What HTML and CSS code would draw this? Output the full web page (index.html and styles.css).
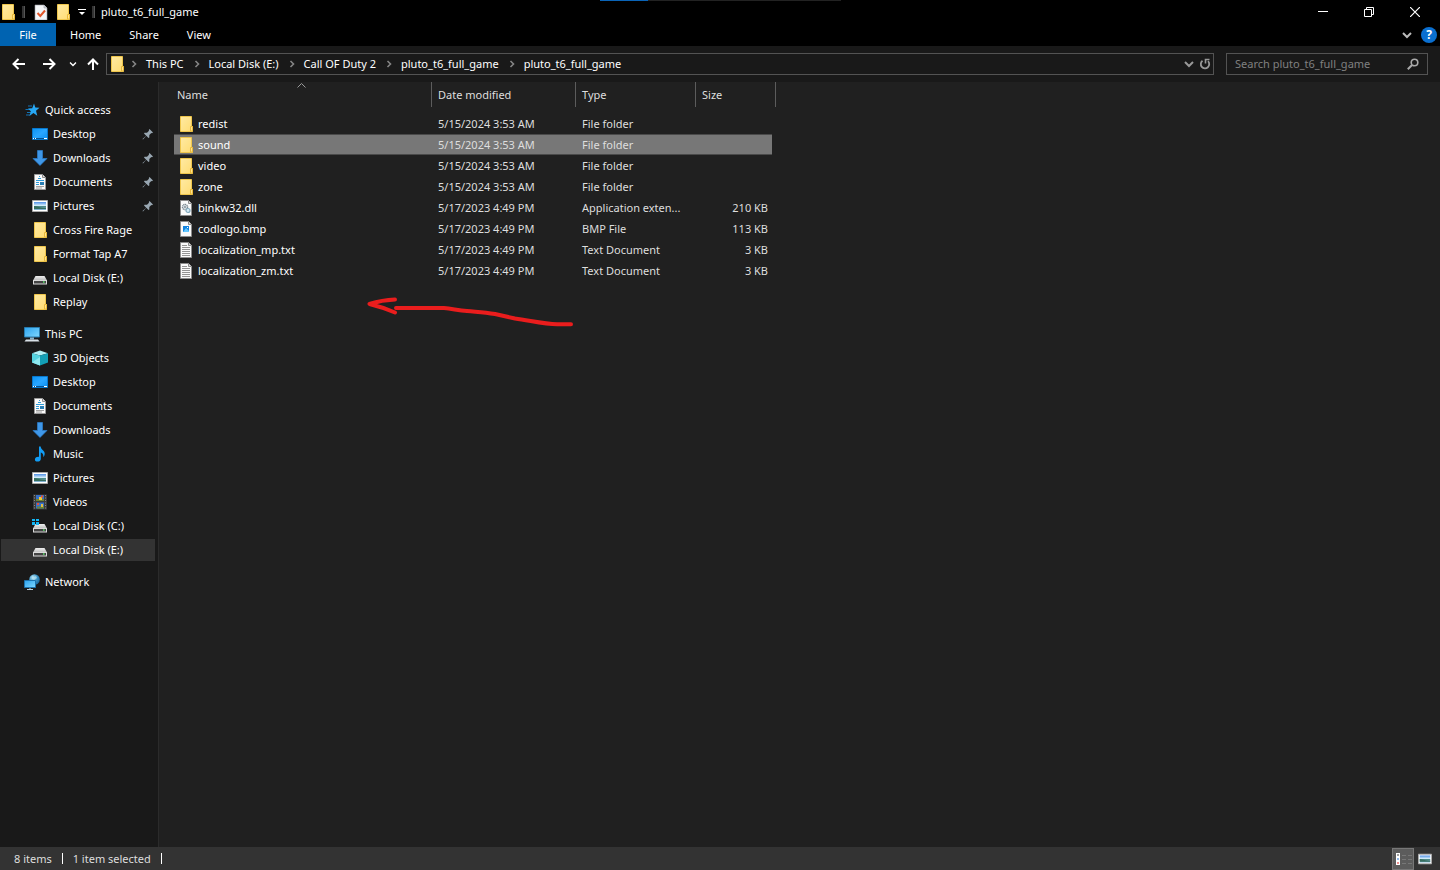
FILE: index.html
```html
<!DOCTYPE html>
<html lang="en">
<head>
<meta charset="utf-8">
<title>pluto_t6_full_game</title>
<link rel="stylesheet" href="styles.css">
</head>
<body>
<svg class="sprite" aria-hidden="true">
  <defs>
    <linearGradient id="g-folder" x1="0" y1="0" x2="1" y2="1"><stop offset="0" stop-color="#ffeaa3"/><stop offset="1" stop-color="#ffdc72"/></linearGradient>
    <linearGradient id="g-desk" x1="0" y1="0" x2="1" y2="1"><stop offset="0" stop-color="#0a93f5"/><stop offset=".5" stop-color="#2aa6ff"/><stop offset="1" stop-color="#0a8ff0"/></linearGradient>
    <linearGradient id="g-screen" x1="0" y1="0" x2="1" y2="1"><stop offset="0" stop-color="#2da3ee"/><stop offset="1" stop-color="#7fd8ff"/></linearGradient>
    <linearGradient id="g-pic" x1="0" y1="0" x2="0" y2="1"><stop offset="0" stop-color="#4f8fe6"/><stop offset=".45" stop-color="#d5eefb"/><stop offset=".55" stop-color="#4d8a86"/><stop offset="1" stop-color="#8bb8dc"/></linearGradient>
    <linearGradient id="g-drive" x1="0" y1="0" x2="0" y2="1"><stop offset="0" stop-color="#f0f0f0"/><stop offset="1" stop-color="#bdbdbd"/></linearGradient>
    <radialGradient id="g-globe" cx=".35" cy=".3" r=".8"><stop offset="0" stop-color="#b8e6f8"/><stop offset=".5" stop-color="#3c94c6"/><stop offset="1" stop-color="#155f94"/></radialGradient>
  </defs>
  <symbol id="folder" viewBox="0 0 16 16"><path d="M2.500.5h11v10h1v5h-12z" fill="url(#g-folder)" stroke="#efc64c"/><path d="M12.500 15V10.500h2V15z" fill="#ffe391" stroke="#e8b93a"/></symbol>
  <symbol id="check" viewBox="0 0 16 16"><path d="M2 1h9l3 3v12H2z" fill="#f4f6f8" stroke="#9aa0a6" stroke-width=".6"/><path d="M11 1v3h3" fill="#cfd5da" stroke="#9aa0a6" stroke-width=".6"/><path d="M4.500 9l2.800 3L12 6.500" fill="none" stroke="#e2572b" stroke-width="2"/></symbol>
  <symbol id="star" viewBox="0 0 16 16"><path d="M4 4h4M1.500 7.500h5M3 10.500h4M2 13h4" stroke="#1273b5" stroke-width="1.200"/><path d="M10 1.500l1.300 4 4.200.3-3.500 3 1.300 4.900-3.900-2.700L5.500 14l1.300-4.700L4 6.600l4.200-.4z" fill="#27a8f5"/></symbol>
  <symbol id="desktop" viewBox="0 0 16 16"><path d="M.5 2.500h15v11H.5z" fill="url(#g-desk)" stroke="#0878cc"/><path d="M1 12.500h14" stroke="#06508e"/><path d="M1 12.500h1M3 12.500h1M12 12.500h3" stroke="#fff"/></symbol>
  <symbol id="download" viewBox="0 0 16 16"><path d="M5.500.5h5v8h4.500L8 15.500 1 8.500h4.500z" fill="#3f97e8" stroke="#2b80cf" stroke-width=".7"/></symbol>
  <symbol id="document" viewBox="0 0 16 16"><path d="M2.500.5h8l3 3v12h-11z" fill="#fafafa" stroke="#9b9b9b"/><path d="M10.500.5v3h3" fill="#ddd" stroke="#8b8b8b"/><path d="M6 4.500h3M7 2.500h1" stroke="#2e9bd8"/><path d="M4 6.500h8M4 8.500h3M4 10.500h3" stroke="#2e9bd8"/><path d="M8 8h4v3H8z" fill="#2a7fb5"/><path d="M4 12.500h8M4 14h6" stroke="#8a8a8a" stroke-width=".8"/></symbol>
  <symbol id="picture" viewBox="0 0 16 16"><path d="M.5 2.500h15v11H.5z" fill="#fff" stroke="#aaa"/><path d="M2 4h12v8H2z" fill="url(#g-pic)"/><path d="M2 8l3 .5 4 1 5 .5v1H2z" fill="#366e5f"/></symbol>
  <symbol id="drive" viewBox="0 0 16 16"><path d="M3.500 6h9L15 10.500H1z" fill="url(#g-drive)"/><path d="M1 10h14v4.500H1z" fill="#dadada"/><path d="M2 11h12v2.500H2z" fill="#444"/><path d="M11 12h1.500" stroke="#59e36a" stroke-width="1.300"/></symbol>
  <symbol id="drive-c" viewBox="0 0 16 16"><use href="#drive"/><path d="M0 1h3v2H0zM4 1h3v2H4zM0 4h3v3H0zM4 4h3v3H4z" fill="#12b6f5"/></symbol>
  <symbol id="computer" viewBox="0 0 16 16"><path d="M.5 1.500h15v9.500H.5z" fill="url(#g-screen)" stroke="#287bad"/><path d="M6 11.500h4v2H6z" fill="#8ab4cc"/><path d="M2 13.500h12l1.500 2H.5z" fill="#d9e1e7"/></symbol>
  <symbol id="cube" viewBox="0 0 16 16"><path d="M8 .5l8 2.800L8 5.500 0 3.300z" fill="#b0eff5"/><path d="M0 3.300l8 2.200v10L0 12.500z" fill="#54d3df"/><path d="M16 3.300L8 5.500v10l8-3z" fill="#139fb5"/><path d="M0 12.500L8 7v8.500z" fill="#8de8ef"/></symbol>
  <symbol id="music" viewBox="0 0 16 16"><path d="M7 .5h1.700c.3 3.500 4.300 4 4 7.500-.1 1.600-.8 2.500-1.500 3 .5-3-.7-4-2.400-4.600V13c0 1.600-1.500 2.600-3.300 2.600S2.500 14.600 3 13c.4-1.500 2.300-2.500 4-2z" fill="#129df5"/></symbol>
  <symbol id="video" viewBox="0 0 16 16"><path d="M1 .5h14v15H1z" fill="#3c3c3c"/><path d="M2.500 1v14M13.500 1v14" stroke="#888" stroke-dasharray="1 1.500"/><path d="M4 1h8v6H4zM4 8.500h8v6H4z" fill="#3671c9"/><path d="M4 5h8v2H4zM5 12.500h7v2H5z" fill="#6d8432"/><path d="M7 3h3v3H7z" fill="#f2ca37"/><path d="M9 1.500h2v2H9zM5 9h2v2H5z" fill="#e75331"/><path d="M9 10h2v3H9z" fill="#e3bd43"/></symbol>
  <symbol id="network" viewBox="0 0 16 16"><circle cx="10.500" cy="5.500" r="5.300" fill="url(#g-globe)"/><path d="M8 2l2 1 2-1 1 2-3 2-2-1z" fill="#b7e3f1" opacity=".7"/><path d="M.5 6.500h11v7H.5z" fill="url(#g-screen)" stroke="#1c72ad"/><path d="M3 15.500h6M6 14v1" stroke="#bad2df"/></symbol>
  <symbol id="pin" viewBox="0 0 12 12"><path d="M7.500 1L11 4.500l-1 .7-.7-.2L7.300 7v2.600L6.500 10 4.300 7.800 1 11.500.5 11l3.700-3.300L2 5.500l.5-.8h2.500L7 2.700l-.2-.8z" fill="#98a6b1"/></symbol>
  <symbol id="dll" viewBox="0 0 16 16"><path d="M2.500.5h8l3 3v12h-11z" fill="#fafafa" stroke="#8c8c8c"/><path d="M10.500.5v3h3" fill="#ddd" stroke="#8c8c8c"/><circle cx="7" cy="7" r="2.600" fill="#d9e1e6" stroke="#7f8a92" stroke-width="1.300" stroke-dasharray="1.200 .5"/><circle cx="7" cy="7" r=".9" fill="#7f8a92"/><circle cx="10" cy="10.500" r="2" fill="#d6ebf5" stroke="#82a9bd" stroke-width="1.200"/></symbol>
  <symbol id="bmp" viewBox="0 0 16 16"><path d="M2.500.5h8l3 3v12h-11z" fill="#fafafa" stroke="#8c8c8c"/><path d="M10.500.5v3h3" fill="#ddd" stroke="#8c8c8c"/><path d="M5 5h6v6H5z" fill="#1283df"/><path d="M5 11l3-4 3 3v1z" fill="#65c8ff"/><path d="M9 6h1v1H9z" fill="#fff"/></symbol>
  <symbol id="text" viewBox="0 0 16 16"><path d="M2.500.5h8l3 3v12h-11z" fill="#fafafa" stroke="#8c8c8c"/><path d="M10.500.5v3h3" fill="#ddd" stroke="#8c8c8c"/><path d="M4 3.500h5M4 5.500h8M4 7.500h8M4 9.500h8M4 11.500h8M4 13.500h8" stroke="#949494"/></symbol>
  <symbol id="chev-right" viewBox="0 0 6 8"><path d="M1.500 1L4.500 4l-3 3" fill="none" stroke="#858585" stroke-width="1.600"/></symbol>
  <symbol id="chev-down" viewBox="0 0 10 8"><path d="M1 2l4 4 4-4" fill="none" stroke="currentColor" stroke-width="2"/></symbol>
</svg>

<div class="window">
  <header>
    <div class="titlebar">
      <svg class="icon"><use href="#folder"/></svg>
      <span class="grip"></span>
      <button class="quick" aria-label="Properties"><svg class="icon"><use href="#check"/></svg></button>
      <button class="quick" aria-label="New folder"><svg class="icon"><use href="#folder"/></svg></button>
      <button class="customize" aria-label="Customize toolbar"><svg width="8" height="7" viewBox="0 0 8 7"><path d="M0 .5h8" stroke="#fff"/><path d="M1 3h6L4 6z" fill="#fff"/></svg></button>
      <span class="grip"></span>
      <h1>pluto_t6_full_game</h1>
      <div class="progress"><span></span></div>
      <div class="controls">
        <button aria-label="Minimize"><svg width="10" height="10"><path d="M0 4.500h10" stroke="#fff"/></svg></button>
        <button aria-label="Restore"><svg width="10" height="10"><path d="M.5 2.500h7v7h-7zM2.500 2V.5h7v7H8" fill="none" stroke="#fff"/></svg></button>
        <button aria-label="Close"><svg width="10" height="10"><path d="M0 0l10 10M10 0L0 10" stroke="#fff" stroke-width="1.200"/></svg></button>
      </div>
    </div>
    <div class="ribbon">
      <button class="tab file">File</button>
      <button class="tab">Home</button>
      <button class="tab">Share</button>
      <button class="tab">View</button>
      <div class="ribbon-end">
        <button aria-label="Expand ribbon"><svg width="10" height="8"><use href="#chev-down"/></svg></button>
        <button class="help" aria-label="Help">?</button>
      </div>
    </div>
    <div class="navbar">
      <div class="history">
        <button aria-label="Back"><svg width="14" height="12"><path d="M13 6H2M6.500 1l-5 5 5 5" fill="none" stroke="#fff" stroke-width="2"/></svg></button>
        <button aria-label="Forward"><svg width="14" height="12"><path d="M1 6h11M7.500 1l5 5-5 5" fill="none" stroke="#fff" stroke-width="2"/></svg></button>
        <button class="recent" aria-label="Recent locations"><svg width="8" height="6" viewBox="0 0 10 8"><use href="#chev-down"/></svg></button>
        <button class="up" aria-label="Up"><svg width="12" height="12"><path d="M6 12V2M1 6.500l5-5 5 5" fill="none" stroke="#fff" stroke-width="2"/></svg></button>
      </div>
      <nav class="address" aria-label="Address">
        <svg class="icon"><use href="#folder"/></svg>
        <svg class="chev"><use href="#chev-right"/></svg><a href="#">This PC</a>
        <svg class="chev"><use href="#chev-right"/></svg><a href="#">Local Disk (E:)</a>
        <svg class="chev"><use href="#chev-right"/></svg><a href="#">Call OF Duty 2</a>
        <svg class="chev"><use href="#chev-right"/></svg><a href="#">pluto_t6_full_game</a>
        <svg class="chev"><use href="#chev-right"/></svg><a href="#">pluto_t6_full_game</a>
        <div class="address-end">
          <button aria-label="Previous locations"><svg width="10" height="8"><use href="#chev-down"/></svg></button>
          <button aria-label="Refresh"><svg width="12" height="12" viewBox="0 0 12 12"><path d="M3.500 2.800A4.200 4.200 0 1 0 9 3.200" fill="none" stroke="#999" stroke-width="1.800"/><path d="M10.500 1.500h-4v4" fill="none" stroke="#999" stroke-width="1.600"/></svg></button>
        </div>
      </nav>
      <label class="search">
        <input type="text" placeholder="Search pluto_t6_full_game" aria-label="Search pluto_t6_full_game">
        <svg width="12" height="12"><circle cx="7.500" cy="4.500" r="3.300" fill="none" stroke="#aaa" stroke-width="1.600"/><path d="M5 7L.8 11.200" stroke="#aaa" stroke-width="2"/></svg>
      </label>
    </div>
  </header>

  <div class="body">
    <nav class="sidebar" aria-label="Folders">
      <div class="group">
        <a class="root" href="#"><svg class="icon"><use href="#star"/></svg>Quick access</a>
        <a href="#"><svg class="icon"><use href="#desktop"/></svg>Desktop<svg class="pin"><use href="#pin"/></svg></a>
        <a href="#"><svg class="icon"><use href="#download"/></svg>Downloads<svg class="pin"><use href="#pin"/></svg></a>
        <a href="#"><svg class="icon"><use href="#document"/></svg>Documents<svg class="pin"><use href="#pin"/></svg></a>
        <a href="#"><svg class="icon"><use href="#picture"/></svg>Pictures<svg class="pin"><use href="#pin"/></svg></a>
        <a href="#"><svg class="icon"><use href="#folder"/></svg>Cross Fire Rage</a>
        <a href="#"><svg class="icon"><use href="#folder"/></svg>Format Tap A7</a>
        <a href="#"><svg class="icon"><use href="#drive"/></svg>Local Disk (E:)</a>
        <a href="#"><svg class="icon"><use href="#folder"/></svg>Replay</a>
      </div>
      <div class="group">
        <a class="root" href="#"><svg class="icon"><use href="#computer"/></svg>This PC</a>
        <a href="#"><svg class="icon"><use href="#cube"/></svg>3D Objects</a>
        <a href="#"><svg class="icon"><use href="#desktop"/></svg>Desktop</a>
        <a href="#"><svg class="icon"><use href="#document"/></svg>Documents</a>
        <a href="#"><svg class="icon"><use href="#download"/></svg>Downloads</a>
        <a href="#"><svg class="icon"><use href="#music"/></svg>Music</a>
        <a href="#"><svg class="icon"><use href="#picture"/></svg>Pictures</a>
        <a href="#"><svg class="icon"><use href="#video"/></svg>Videos</a>
        <a href="#"><svg class="icon"><use href="#drive-c"/></svg>Local Disk (C:)</a>
        <a class="current" href="#"><svg class="icon"><use href="#drive"/></svg>Local Disk (E:)</a>
      </div>
      <div class="group">
        <a class="root" href="#"><svg class="icon"><use href="#network"/></svg>Network</a>
      </div>
    </nav>

    <main>
      <table class="files">
        <colgroup><col class="c-name"><col class="c-date"><col class="c-type"><col class="c-size"></colgroup>
        <thead><tr>
          <th>Name<svg class="sort" width="9" height="5"><path d="M.5 4.500l4-4 4 4" fill="none" stroke="#999"/></svg></th>
          <th>Date modified</th><th>Type</th><th>Size</th>
        </tr></thead>
        <tbody>
          <tr><td><span class="name"><svg class="icon"><use href="#folder"/></svg>redist</span></td><td>5/15/2024 3:53 AM</td><td>File folder</td><td></td></tr>
          <tr class="selected"><td><span class="name"><svg class="icon"><use href="#folder"/></svg>sound</span></td><td>5/15/2024 3:53 AM</td><td>File folder</td><td></td></tr>
          <tr><td><span class="name"><svg class="icon"><use href="#folder"/></svg>video</span></td><td>5/15/2024 3:53 AM</td><td>File folder</td><td></td></tr>
          <tr><td><span class="name"><svg class="icon"><use href="#folder"/></svg>zone</span></td><td>5/15/2024 3:53 AM</td><td>File folder</td><td></td></tr>
          <tr><td><span class="name"><svg class="icon"><use href="#dll"/></svg>binkw32.dll</span></td><td>5/17/2023 4:49 PM</td><td>Application exten...</td><td>210 KB</td></tr>
          <tr><td><span class="name"><svg class="icon"><use href="#bmp"/></svg>codlogo.bmp</span></td><td>5/17/2023 4:49 PM</td><td>BMP File</td><td>113 KB</td></tr>
          <tr><td><span class="name"><svg class="icon"><use href="#text"/></svg>localization_mp.txt</span></td><td>5/17/2023 4:49 PM</td><td>Text Document</td><td>3 KB</td></tr>
          <tr><td><span class="name"><svg class="icon"><use href="#text"/></svg>localization_zm.txt</span></td><td>5/17/2023 4:49 PM</td><td>Text Document</td><td>3 KB</td></tr>
        </tbody>
      </table>
      <svg class="arrow" width="220" height="45" aria-hidden="true"><path d="M35 9.500Q22 10 9.500 14 22 17 35 22.500M36 18H84C92 18.500 98 20.500 107 21 118 22 124 22 135 24L155 28.500C170 30.500 184 34 197 34.300H211" fill="none" stroke="#ea1d1d" stroke-width="4" stroke-linecap="round" stroke-linejoin="round"/></svg>
    </main>
  </div>

  <footer>
    <span>8 items</span><span>1 item selected</span>
    <div class="views">
      <button class="active" aria-label="Details view"><svg width="18" height="14"><path d="M2 1h4v12H2z" fill="#fff"/><path d="M3.500 3h1" stroke="#444" stroke-width="2"/><path d="M3.500 7h1" stroke="#2a78d8" stroke-width="2"/><path d="M3.500 11h1" stroke="#d22" stroke-width="2"/><path d="M8 3.500h4M14 3.500h4M8 7.500h4M14 7.500h4M8 11.500h4M14 11.500h4" stroke="#777"/></svg></button>
      <button aria-label="Large icons view"><svg width="14" height="12" viewBox="0 2 16 12"><use href="#picture" width="16" height="16"/></svg></button>
    </div>
  </footer>
</div>
</body>
</html>
```
FILE: styles.css
```css
* { box-sizing: border-box; }
body {
  margin: 0;
  background: #202020;
  color: #fff;
  font: 11px/16px "Noto Sans", "Open Sans", sans-serif;
}
button, input { font: inherit; color: inherit; background: none; border: 0; padding: 0; margin: 0; }
button { display: flex; align-items: center; justify-content: center; }
a { color: inherit; text-decoration: none; }
svg { display: block; flex: none; }
.sprite { position: absolute; width: 0; height: 0; }
.icon { width: 16px; height: 16px; }
.window { display: flex; flex-direction: column; min-height: 100vh; }

.titlebar { position: relative; display: flex; align-items: center; height: 23px; background: #000; }
.grip { width: 3px; height: 12px; margin: 0 8px 0 6px; background: #333; border-right: 1px solid #555; }
.quick { margin-right: 6px; }
.customize { width: 8px; margin: 2px 0 0 1px; }
h1 { margin: 0 0 0 -2px; font-size: 11px; font-weight: 400; }
.progress { position: absolute; top: 0; left: 600px; width: 241px; height: 1px; background: #222; }
.progress span { display: block; width: 20%; height: 1px; background: #0a64b8; }
.controls { display: flex; margin-left: auto; padding-right: 2px; }
.controls button { width: 46px; height: 22px; }

.ribbon { display: flex; height: 23px; background: #000; }
.tab { padding: 0 14px; }
.file { width: 56px; background: #0063b1; }
.ribbon-end { display: flex; align-items: center; gap: 9px; margin-left: auto; padding-right: 3px; color: #bbb; }
.help { width: 16px; height: 16px; border-radius: 50%; background: #0a6fd0; color: #fff; font-size: 12px; font-weight: 700; }

.navbar { display: flex; align-items: center; height: 36px; padding: 0 12px 0 4px; background: #191919; }
.history { display: flex; align-items: center; }
.history button { width: 30px; height: 22px; }
.history .recent { width: 17px; }
.history .up { width: 23px; }
.address { display: flex; flex: 1; align-items: center; height: 22px; margin-left: 2px; padding-left: 2px; border: 1px solid #535353; }
.address .icon { margin-right: -4px; }
.chev { width: 6px; height: 8px; margin: 0 9px 0 10px; }
.address-end { display: flex; margin-left: auto; color: #999; }
.address-end button { width: 16px; height: 20px; }
.search { display: flex; align-items: center; width: 202px; height: 22px; margin-left: 12px; padding: 0 8px; border: 1px solid #535353; }
.search input { flex: 1; min-width: 0; outline: 0; }
.search input::placeholder { color: #808080; opacity: 1; }

.body { display: flex; flex: 1; }
.sidebar { width: 159px; padding: 16px 3px 0 1px; background: #191919; border-right: 1px solid #2b2b2b; }
.group { margin-bottom: 8px; }
.sidebar a { display: flex; align-items: center; gap: 5px; height: 24px; padding-left: 31px; white-space: nowrap; }
.sidebar .root { padding-left: 23px; }
.sidebar .current { background: #333; background-clip: padding-box; border-block: 1px solid #191919; }
.pin { width: 12px; height: 12px; margin: 0 1px 0 auto; }

main { position: relative; flex: 1; padding-left: 15px; }
.files { width: 602px; table-layout: fixed; border-collapse: separate; border-spacing: 0; }
.c-name { width: 258px; }
.c-date { width: 144px; }
.c-type { width: 120px; }
.c-size { width: 80px; }
th { position: relative; height: 25px; padding: 0 6px; border-right: 1px solid #5c5c5c; font-weight: 400; text-align: left; color: #dedede; }
th:first-child { padding-left: 3px; }
.sort { position: absolute; top: 1px; left: 123px; }
tbody::before { content: ""; display: table-row; height: 6px; }
td { height: 21px; padding: 0 6px; color: #dedede; white-space: nowrap; }
td:first-child { padding-left: 4px; }
td:last-child { padding-right: 4px; border-right: 4px solid transparent; background-clip: padding-box; text-align: right; }
.name { display: flex; align-items: center; gap: 4px; color: #fff; }
.selected td { background-color: #777; box-shadow: inset 0 1px #4a4a4a, inset 0 -1px #4a4a4a; }
.arrow { position: absolute; left: 201px; top: 208px; }

footer { display: flex; align-items: center; height: 23px; padding-left: 14px; background: #333; color: #dedede; }
footer > span { display: flex; align-items: center; margin-right: 10px; }
footer > span::after { content: ""; width: 1px; height: 11px; margin-left: 10px; background: #fff; }
.views { display: flex; margin-left: auto; padding-right: 4px; }
.views button { width: 22px; height: 22px; }
.views .active { background: #5c5c5c; border: 1px solid #777; }
```
